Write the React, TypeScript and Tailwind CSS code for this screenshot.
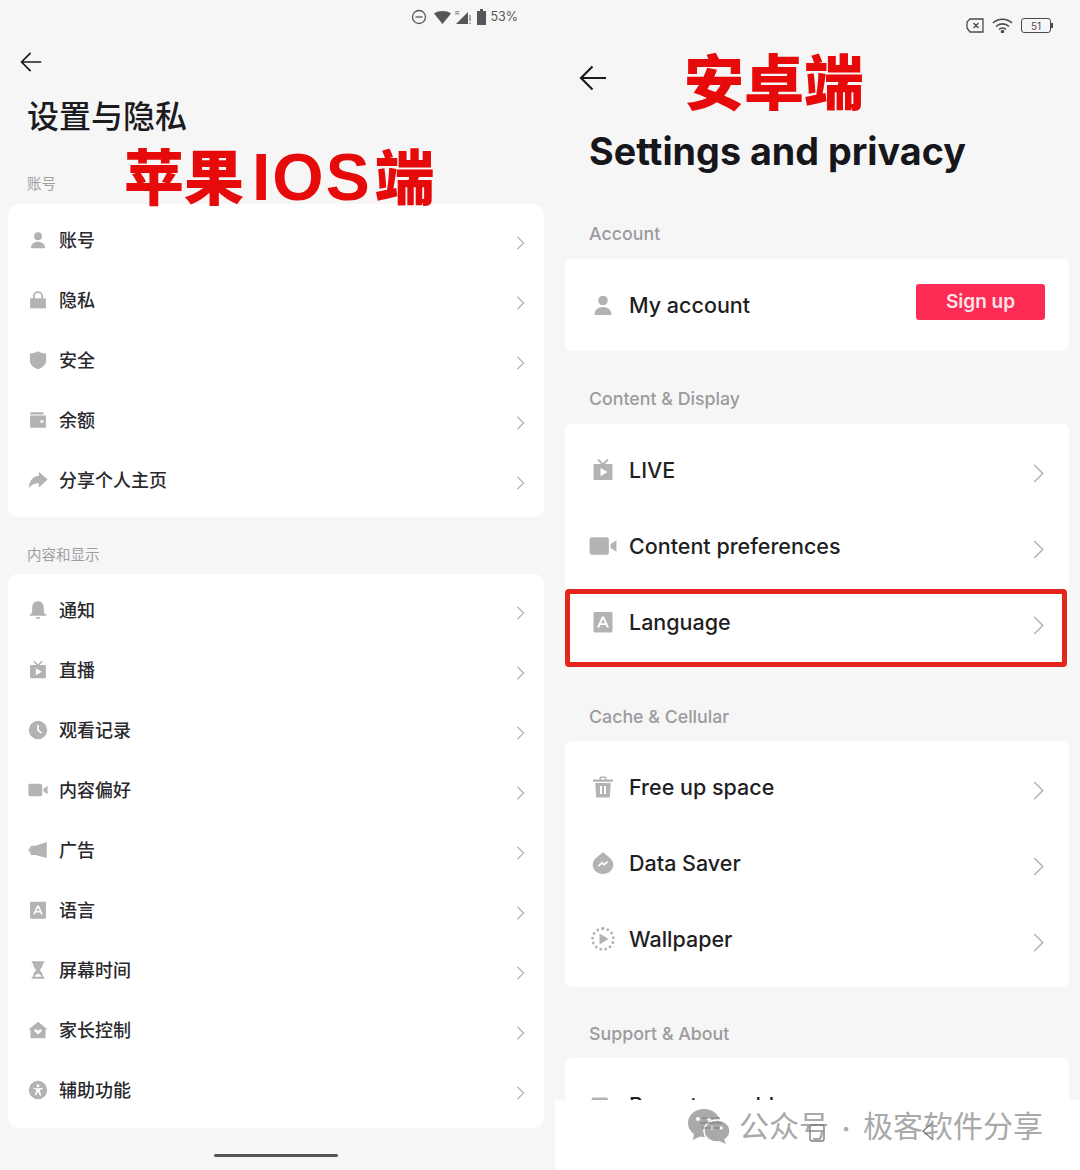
import type { ReactNode } from "react";

const cjk = "font-['Noto_Sans_CJK_SC','Noto_Sans',sans-serif]";
const latin = "font-['Inter','Noto_Sans',sans-serif]";

const icons: Record<string, ReactNode> = {
  user: (
    <>
      <circle cx="12" cy="7.5" r="4.8" />
      <path d="M3.5 22c0-5 3.400-7.900 8.500-7.900s8.500 2.900 8.500 7.900z" />
    </>
  ),
  lock: (
    <>
      <path d="M2.500 10h19v12h-19z" />
      <path d="M7 11V7.500a5 5 0 0 1 10 0V11" fill="none" stroke="currentColor" strokeWidth="2.200" />
    </>
  ),
  shield: <path d="M12 1.500c3 1.700 6 2.500 9.800 2.700V12c0 5.500-4 9-9.800 11C6.200 21 2.200 17.500 2.200 12V4.200C6 4 9 3.200 12 1.500z" />,
  wallet: (
    <path fillRule="evenodd" d="M2.500 4.500c0-1 .8-1.800 1.800-1.800h14.200v2.600h-16zM2.500 6.500h19v14.800h-19zM15 12.200v3h3.500v-3z" />
  ),
  share: <path d="M13 2 23.500 11.500 13 21v-5c-5 0-8.500 1.500-12 5.500C1.300 13.500 5.500 7.500 13 7z" />,
  bell: (
    <>
      <path d="M12 1.500c4.200 0 7 3.200 7 8v5.500l3.800 4H1.200L5 15V9.500c0-4.800 2.800-8 7-8z" />
      <path d="M9.500 20.500h5v2h-5z" />
    </>
  ),
  live: (
    <>
      <path d="m7 1.500 4.500 4.500h1L17 1.500" fill="none" stroke="currentColor" strokeWidth="1.800" />
      <path fillRule="evenodd" d="M2.500 7c0-.6.4-1 1-1h17c.6 0 1 .4 1 1v14c0 .6-.4 1-1 1h-17c-.6 0-1-.4-1-1zM9.500 10v8.200l7-4.100z" />
    </>
  ),
  clock: (
    <path fillRule="evenodd" d="M12 1a11 11 0 1 0 0 22 11 11 0 0 0 0-22zM11 6h2v5.700l3.800 3.300-1.300 1.500L11 12.600z" />
  ),
  video: (
    <>
      <rect x="0.500" y="4.500" width="16.500" height="15" rx="2" />
      <path d="m18.500 10.500 5-3.500v10l-5-3.500z" />
    </>
  ),
  ad: (
    <>
      <path d="M22.500 2.500v19L9 18H4.500c-1 0-1.700-.8-1.700-1.700V8.500c0-1 .7-1.700 1.700-1.700H9z" />
      <path d="M2.800 10H1v4.500h1.800z" />
    </>
  ),
  lang: (
    <path fillRule="evenodd" d="M4 2h16c.9 0 1.500.6 1.500 1.500V21c0 .9-.6 1.500-1.500 1.500H4c-.9 0-1.500-.6-1.500-1.500V3.500C2.500 2.600 3.100 2 4 2zM11 6.500 6 17.500h2.300l1-2.400h5.400l1 2.400H18L13 6.500zm1 2.500 1.900 4.300h-3.800z" />
  ),
  hourglass: (
    <path fillRule="evenodd" d="M4.500 1.500h15V4h-1.600c0 3.500-1.800 6.300-4 8 2.200 1.700 4 4.500 4 8h1.600v2.500h-15V20h1.600c0-3.500 1.800-6.300 4-8-2.200-1.700-4-4.500-4-8H4.500zM8 20h8c-.7-2.200-2.200-3.500-4-3.500s-3.300 1.300-4 3.500z" />
  ),
  home: (
    <path fillRule="evenodd" d="M12 2 23.500 11.500H21V22H3V11.500H.5zM12 17.500l4-3.800c1.200-1.300-.5-3.300-2-2.200l-2 1.400-2-1.400c-1.500-1.100-3.200.9-2 2.200z" />
  ),
  access: (
    <path fillRule="evenodd" d="M12 1a11 11 0 1 0 0 22 11 11 0 0 0 0-22zM12 5a1.800 1.800 0 1 1 0 3.600A1.800 1.800 0 0 1 12 5zM6.500 9.200l3.700.7h3.600l3.700-.7.400 1.600-3.400 1v2.400l1.500 4.300-1.600.5L12 14.800l-.4 0-1.900 3.700-1.600-.5 1.500-4.300v-2.400l-3.400-1z" />
  ),
  trash: (
    <path fillRule="evenodd" d="M8.500 3c0-1 .7-1.500 1.500-1.500h4c.8 0 1.500.5 1.500 1.500V4.500h6.500v2.200H2V4.500h6.500zM10 3v1.500h4V3zM4.200 8h15.600l-1 14.500H5.200zM9 11v8h2v-8zm4 0v8h2v-8z" />
  ),
  drop: (
    <path fillRule="evenodd" d="M12 1c2 2.500 10.300 6.500 10.300 12.500C22.300 19 17.700 23 12 23S1.700 19 1.700 13.500C1.700 7.500 10 3.500 12 1zM6.800 14.500l1.200 1.300 3-2.800 2.200 1.800 4-3.600-1.200-1.300-2.800 2.500-2.200-1.800z" />
  ),
  wallpaper: (
    <>
      <path d="m8.500 6.500 9 5.500-9 5.500z" />
      <path d="M12 1.500a10.500 10.500 0 1 1 0 21 10.500 10.500 0 0 1 0-21z" fill="none" stroke="currentColor" strokeWidth="2.800" strokeLinecap="round" strokeDasharray="0.100 4.900" />
    </>
  ),
};

function Icon({ name, size }: { name: string; size: number }) {
  return (
    <svg width={size} height={size} viewBox="0 0 24 24" fill="currentColor" className="shrink-0 text-[#b3b3b3]">
      {icons[name]}
    </svg>
  );
}

function Chevron({ className }: { className: string }) {
  return (
    <svg viewBox="0 0 10 18" fill="none" stroke="#b4b4b4" strokeWidth="1.500" className={className}>
      <path d="m1 1 8 8-8 8" />
    </svg>
  );
}

function Arrow({ className }: { className: string }) {
  return (
    <svg viewBox="0 0 28 26" fill="none" stroke="#1c1c20" strokeWidth="2.200" className={className}>
      <path d="M27 13H2M13.500 1.500 2 13l11.500 11.500" />
    </svg>
  );
}

function LeftRow({ icon, label }: { icon: string; label: string }) {
  return (
    <div className="flex h-[60px] items-center pl-[20px] pr-[19px]">
      <Icon name={icon} size={20} />
      <span className={`${cjk} mb-[2px] ml-[11px] flex-1 text-[18px] font-medium text-[#2a2a2e]`}>{label}</span>
      <Chevron className="mt-[6px] h-[14px] w-[9px]" />
    </div>
  );
}

function RightRow({ icon, label, size = 24 }: { icon: string; label: string; size?: number }) {
  return (
    <div className="flex h-[76px] items-center pl-[26px] pr-[25px]">
      <div className="flex w-[24px] justify-center">
        <Icon name={icon} size={size} />
      </div>
      <span className={`${latin} ml-[14px] flex-1 text-[21.500px] font-medium text-[#1f1f23]`}>{label}</span>
      <Chevron className="mt-[6px] h-[19px] w-[11px]" />
    </div>
  );
}

function RightLabel({ children, className }: { children: string; className: string }) {
  return <p className={`${latin} h-[24px] pl-[34px] text-[17.800px] leading-[26px] font-medium text-[#9b9b9d] ${className}`}>{children}</p>;
}

const accountRows = [
  ["user", "账号"],
  ["lock", "隐私"],
  ["shield", "安全"],
  ["wallet", "余额"],
  ["share", "分享个人主页"],
];

const contentRows = [
  ["bell", "通知"],
  ["live", "直播"],
  ["clock", "观看记录"],
  ["video", "内容偏好"],
  ["ad", "广告"],
  ["lang", "语言"],
  ["hourglass", "屏幕时间"],
  ["home", "家长控制"],
  ["access", "辅助功能"],
];

export default function App() {
  return (
    <div className="relative flex h-[1170px] w-[1080px] overflow-hidden bg-[#f6f6f7]">
      {/* ios side */}
      <div className="relative flex w-[555px] shrink-0 flex-col">
        <div className="flex h-[32px] items-center justify-end gap-[4px] pr-[37px] pt-[2px] text-[#55565a]">
          <svg width="16" height="16" viewBox="0 0 16 16" fill="none" stroke="currentColor" strokeWidth="1.300" className="mr-[3px]">
            <circle cx="8" cy="8" r="6.500" />
            <path d="M4.500 8h7" />
          </svg>
          <svg width="17" height="13" viewBox="0 0 17 13" fill="currentColor">
            <path d="M0 2.500C4.500-.8 12.500-.8 17 2.500L8.500 13z" />
          </svg>
          <svg width="16" height="16" viewBox="0 0 16 16" fill="currentColor">
            <text x="0" y="6" fontSize="6" fontFamily="Liberation Sans">R</text>
            <path d="M13 3v12H1z" />
            <path d="M14.500 6v6h1V6zM14.500 13.500h1V15h-1z" />
          </svg>
          <svg width="9" height="16" viewBox="0 0 9 16" fill="currentColor" className="ml-[2px]">
            <path d="M3 0h3v2h3v14H0V2h3z" />
          </svg>
          <span className={`${latin} text-[12.500px] font-normal`}>53%</span>
        </div>
        <Arrow className="ml-[20px] mt-[19px] h-[22px] w-[22px]" />
        <h1 className={`${cjk} ml-[27px] mt-[18px] text-[32px] leading-[46px] font-medium text-[#1c1c20]`}>设置与隐私</h1>
        <p className={`${cjk} ml-[27px] mt-[35px] text-[14.500px] leading-[22px] text-[#a0a0a2]`}>账号</p>
        <div className="ml-[8px] mt-[10px] w-[536px] rounded-[10px] bg-white pb-[7px] pt-[6px]">
          {accountRows.map(([icon, label]) => (
            <LeftRow key={label} icon={icon} label={label} />
          ))}
        </div>
        <p className={`${cjk} ml-[27px] mt-[26px] text-[14.500px] leading-[22px] text-[#a0a0a2]`}>内容和显示</p>
        <div className="ml-[8px] mt-[9px] w-[536px] rounded-[10px] bg-white pb-[8px] pt-[6px]">
          {contentRows.map(([icon, label]) => (
            <LeftRow key={label} icon={icon} label={label} />
          ))}
        </div>
        <div className="ml-[214px] mt-[26px] h-[3px] w-[124px] rounded-full bg-[#55565a]" />
        <span className={`${cjk} absolute left-[124px] top-[134px] whitespace-nowrap text-[60px] leading-[80px] font-black text-[#e60a0a]`}>
          苹果
          <span className="ml-[8px] mr-[3px] font-['Liberation_Sans',sans-serif] text-[66px] font-bold tracking-[2px]">IOS</span>
          端
        </span>
      </div>

      {/* android side */}
      <div className="relative flex w-[525px] shrink-0 flex-col">
        <div className="flex h-[33px] items-end justify-end gap-[8px] pr-[27px] text-[#4b4b4f]">
          <svg width="18" height="15" viewBox="0 0 18 15" fill="none" stroke="currentColor" strokeWidth="1.300">
            <path d="M4 1h13v13H4L1 10V4zM7.500 5l5 5M12.500 5l-5 5" />
          </svg>
          <svg width="21" height="15" viewBox="0 0 21 15" fill="none" stroke="currentColor" strokeWidth="1.600">
            <path d="M1 5c5-5 14-5 19 0M4 8.500c3.500-3.500 9.500-3.500 13 0M7 11.500c2-1.800 5-1.800 7 0" />
            <circle cx="10.500" cy="13.500" r="1" fill="currentColor" />
          </svg>
          <div className="flex items-center">
            <div className={`${latin} flex h-[15px] w-[30px] items-center justify-center rounded-[3px] border-[1.500px] border-[#4b4b4f] text-[10px] leading-none`}>51</div>
            <div className="h-[5px] w-[2px] bg-[#4b4b4f]" />
          </div>
        </div>
        <Arrow className="ml-[24px] mt-[32px] h-[26px] w-[28px]" />
        <h1 className={`${latin} ml-[34px] mt-[35px] text-[37.700px] leading-[50px] font-bold text-[#17171b]`}>Settings and privacy</h1>
        <RightLabel className="mt-[45px]">Account</RightLabel>
        <div className="ml-[10px] mt-[14px] flex h-[92px] w-[504px] items-center rounded-[6px] bg-white pl-[26px] pr-[24px]">
          <Icon name="user" size={24} />
          <span className={`${latin} ml-[14px] flex-1 text-[21.500px] font-medium text-[#1f1f23]`}>My account</span>
          <div className={`${latin} mb-[6px] flex h-[36px] w-[129px] items-center justify-center rounded-[3px] bg-[#fe2c55] text-[19px] font-semibold text-[#fbe3e8]`}>Sign up</div>
        </div>
        <RightLabel className="mt-[35px]">{"Content & Display"}</RightLabel>
        <div className="ml-[10px] mt-[14px] w-[504px] rounded-[6px] bg-white pb-[6px] pt-[8px]">
          <RightRow icon="live" label="LIVE" />
          <RightRow icon="video" label="Content preferences" size={28} />
          <div className="relative">
            <RightRow icon="lang" label="Language" />
            <div className="absolute inset-x-0 bottom-[-7px] top-[5px] right-[2px] rounded-[4px] border-[5px] border-[#e3261d]" />
          </div>
        </div>
        <RightLabel className="mt-[38px]">{"Cache & Cellular"}</RightLabel>
        <div className="ml-[10px] mt-[13px] w-[504px] rounded-[6px] bg-white pb-[10px] pt-[8px]">
          <RightRow icon="trash" label="Free up space" />
          <RightRow icon="drop" label="Data Saver" />
          <RightRow icon="wallpaper" label="Wallpaper" />
        </div>
        <RightLabel className="mt-[34px]">{"Support & About"}</RightLabel>
        <div className="ml-[10px] mt-[13px] h-[42px] w-[504px] overflow-hidden rounded-t-[6px] bg-white pl-[26px] pt-[32px]">
          <div className="flex items-center">
            <Icon name="video" size={24} />
            <span className={`${latin} ml-[14px] text-[21.500px] leading-[30px] font-medium text-[#1f1f23]`}>Report a problem</span>
          </div>
        </div>
        {/* bottom bar with watermark over it */}
        <div className="relative flex h-[70px] items-center bg-white pl-[133px]">
          <svg width="44" height="36" viewBox="0 0 44 36" className="mb-[16px] shrink-0">
            <ellipse cx="16" cy="14" rx="16" ry="14" fill="#a9a9a9" />
            <path d="m6 24-1 7 8-4z" fill="#a9a9a9" />
            <ellipse cx="29" cy="22" rx="13" ry="11" fill="#a9a9a9" stroke="#fff" strokeWidth="1.500" />
            <path d="m36 30 2 5-7-3z" fill="#a9a9a9" />
            <circle cx="10" cy="10" r="2" fill="#fff" />
            <circle cx="21" cy="10" r="2" fill="#fff" />
            <circle cx="24" cy="19" r="1.700" fill="#fff" />
            <circle cx="33" cy="19" r="1.700" fill="#fff" />
          </svg>
          <span className={`${cjk} mb-[18px] ml-[7px] whitespace-nowrap text-[30px] leading-[40px] text-[#a9a9a9]`}>
            公众号<span className="mx-[7px] text-[20px]">·</span>极客软件分享
          </span>
          <svg width="26" height="12" viewBox="0 0 26 12" fill="none" stroke="#7d7d7d" strokeWidth="1.200" className="absolute left-[143px] top-[17px]">
            <path d="M4 1h18M2 6h22M4 11h18" />
          </svg>
          <svg width="16" height="18" viewBox="0 0 16 18" fill="none" stroke="#7d7d7d" strokeWidth="1.400" className="absolute left-[254px] top-[24px]">
            <rect x="1" y="1" width="14" height="16" rx="2" />
          </svg>
          <svg width="12" height="18" viewBox="0 0 12 18" fill="none" stroke="#7d7d7d" strokeWidth="1.400" className="absolute left-[366px] top-[22px]">
            <path d="M11 1 2 9l9 8" />
          </svg>
        </div>
        <span className={`${cjk} absolute left-[129px] top-[39px] text-[60px] leading-[80px] font-black text-[#e60a0a]`}>安卓端</span>
      </div>
    </div>
  );
}
